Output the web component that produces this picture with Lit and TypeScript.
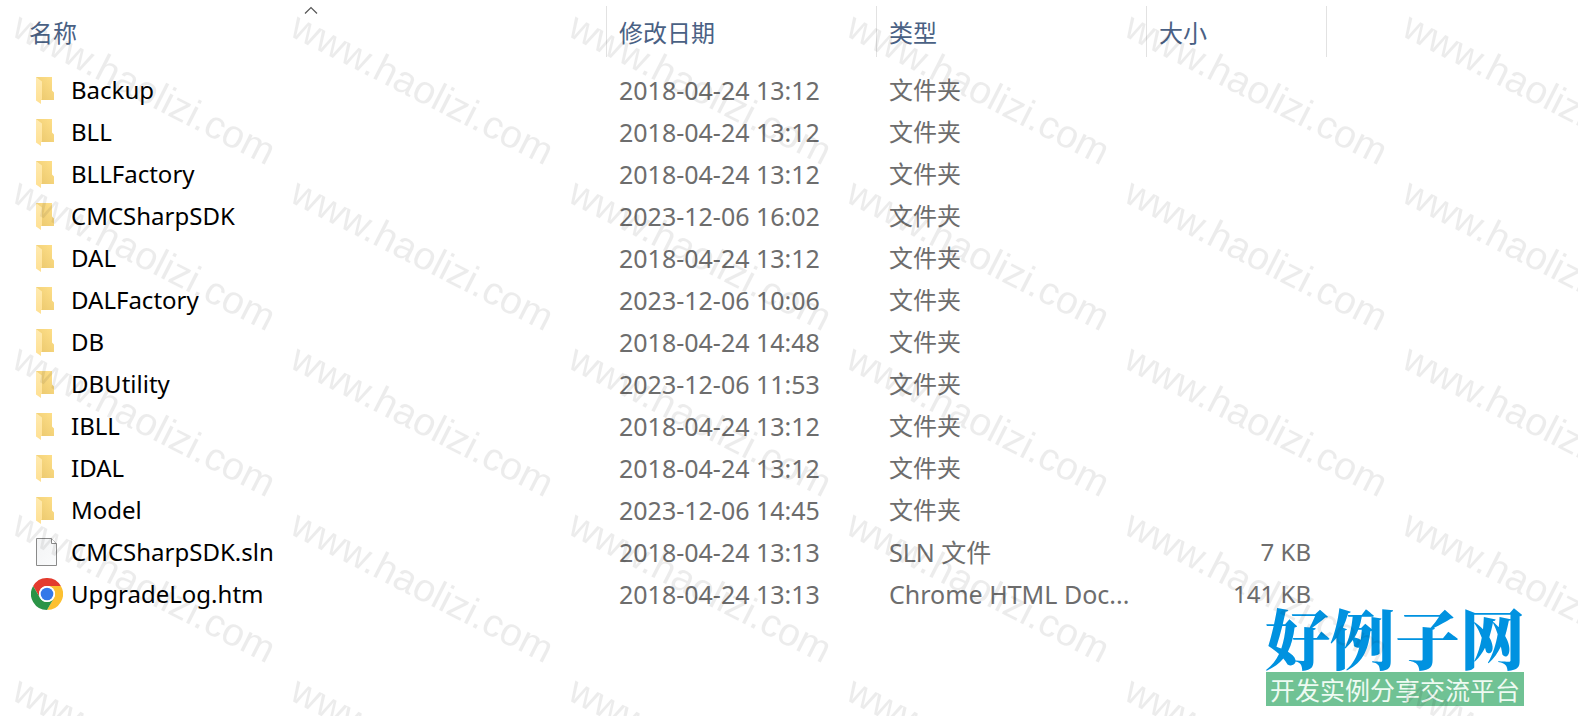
import { LitElement, html, svg, css, nothing } from "lit";
import { customElement, state } from "lit/decorators.js";

type Kind = "folder" | "file" | "chrome";

interface Entry {
  name: string;
  date: string;
  kind: Kind;
  type: string;
  size?: string;
}

const folder = (name: string, date: string): Entry => ({ name, date, kind: "folder", type: "文件夹" });

const ENTRIES: Entry[] = [
  folder("Backup", "2018-04-24 13:12"),
  folder("BLL", "2018-04-24 13:12"),
  folder("BLLFactory", "2018-04-24 13:12"),
  folder("CMCSharpSDK", "2023-12-06 16:02"),
  folder("DAL", "2018-04-24 13:12"),
  folder("DALFactory", "2023-12-06 10:06"),
  folder("DB", "2018-04-24 14:48"),
  folder("DBUtility", "2023-12-06 11:53"),
  folder("IBLL", "2018-04-24 13:12"),
  folder("IDAL", "2018-04-24 13:12"),
  folder("Model", "2023-12-06 14:45"),
  { name: "CMCSharpSDK.sln", date: "2018-04-24 13:13", kind: "file", type: "SLN 文件", size: "7 KB" },
  { name: "UpgradeLog.htm", date: "2018-04-24 13:13", kind: "chrome", type: "Chrome HTML Doc...", size: "141 KB" },
];

@customElement("file-icon")
class FileIcon extends LitElement {
  static properties = { kind: {} };
  declare kind: Kind;

  static styles = css`
    :host { display: block; width: 32px; height: 32px; flex: none; }
    svg { display: block; width: 32px; height: 32px; }
  `;

  private shape() {
    if (this.kind === "folder") {
      return svg`
        <defs>
          <linearGradient id="back" x1="0" x2="1" y1="1" y2="0">
            <stop offset="0" stop-color="#e9c66b" /><stop offset="1" stop-color="#ffe08a" />
          </linearGradient>
          <linearGradient id="flap" x1="0" x2="0" y1="0" y2="1">
            <stop offset="0" stop-color="#ffeab0" /><stop offset="1" stop-color="#ffe092" />
          </linearGradient>
        </defs>
        <path d="M5 3H21V16.5L23 18.5V26H5Z" fill="url(#back)" />
        <path d="M5 3L11 7.5V25.5L10 26V30L5 26.5Z" fill="url(#flap)" />`;
    }
    if (this.kind === "file") {
      return svg`
        <defs>
          <linearGradient id="paper" x1="0" x2="1" y1="0" y2="1">
            <stop offset="0" stop-color="#f3f4f5" /><stop offset="1" stop-color="#fafbfc" />
          </linearGradient>
        </defs>
        <path d="M5.5 2.5H20.5L25.5 7.5V29.5H5.5Z" fill="url(#paper)" stroke="#8a8a8a" />
        <path d="M20.5 2.5V7.5H25.5" fill="#fff" stroke="#8a8a8a" />`;
    }
    return svg`
      <path d="M16 8H29.86A16 16 0 0 0 2.14 8L9.07 20A8 8 0 0 1 16 8Z" fill="#e33b2e" />
      <path d="M22.93 20L16 32A16 16 0 0 0 29.86 8H16A8 8 0 0 1 22.93 20Z" fill="#fcc031" />
      <path d="M9.07 20L2.14 8A16 16 0 0 0 16 32L22.93 20A8 8 0 0 1 9.07 20Z" fill="#2b9447" />
      <circle cx="16" cy="16" r="8" fill="#fff" />
      <circle cx="16" cy="16" r="6.3" fill="#3479e9" />`;
  }

  render() {
    return html`<svg viewBox="0 0 32 32" aria-hidden="true">${this.shape()}</svg>`;
  }
}

@customElement("water-mark")
class WaterMark extends LitElement {
  static styles = css`
    :host { position: absolute; inset: 0; pointer-events: none; overflow: hidden; }
    svg { display: block; width: 100%; height: 100%; }
    text { font: 39px "Liberation Sans", Arial, sans-serif; fill: #000; fill-opacity: 0.075; }
  `;

  render() {
    return html`<svg aria-hidden="true">
      <defs>
        <pattern id="tile" x="4" y="8" width="278" height="166" patternUnits="userSpaceOnUse">
          <text transform="translate(6 27) rotate(27)">www.haolizi.com</text>
        </pattern>
      </defs>
      <rect width="100%" height="100%" fill="url(#tile)" />
    </svg>`;
  }
}

@customElement("site-badge")
class SiteBadge extends LitElement {
  static styles = css`
    :host {
      position: absolute;
      right: 54px;
      bottom: 10px;
      width: 258px;
      display: flex;
      flex-direction: column;
      align-items: center;
      gap: 6px;
      white-space: nowrap;
    }
    .title {
      font: 900 65px/60px "Noto Serif CJK SC", "Noto Sans CJK SC", serif;
      color: #0092e0;
    }
    .tagline {
      align-self: stretch;
      text-align: center;
      font: 25px/34px "Noto Sans CJK SC", sans-serif;
      color: #eefaf2;
      background: #70c294;
    }
  `;

  render() {
    return html`<div class="title">好例子网</div><div class="tagline">开发实例分享交流平台</div>`;
  }
}

@customElement("app-root")
class AppRoot extends LitElement {
  @state() private ascending = true;

  static styles = css`
    :host {
      display: block;
      position: relative;
      min-height: 100vh;
      overflow: hidden;
      background: #fff;
      color: #6d6d6d;
      font: 25px/42px "Noto Sans", "Noto Sans CJK SC", sans-serif;
    }
    .list { padding: 6px 251px 0 0; }
    table { width: 100%; table-layout: fixed; border-collapse: separate; border-spacing: 0; }
    .date, .type { width: 270px; }
    .size { width: 180px; }
    th { position: relative; height: 51px; padding: 0; box-sizing: border-box; border-right: 1px solid #e2e2e2; }
    th button {
      display: block;
      width: 100%;
      padding: 0 12px;
      border: 0;
      background: none;
      color: #4a6184;
      font: 24px/49px "Noto Sans CJK SC", sans-serif;
      text-align: left;
      cursor: pointer;
    }
    th.name button { padding-left: 29px; }
    .caret { position: absolute; top: 0; left: 16px; right: 0; margin: 0 auto; width: 14px; height: 8px; }
    .caret.down { transform: scaleY(-1); }
    tbody::before { content: ""; display: block; height: 12px; }
    td { height: 42px; padding: 0 12px; box-sizing: border-box; white-space: nowrap; }
    td.name { padding-left: 31px; color: #000; font-size: 24px; }
    td.size { padding-right: 16px; text-align: right; font-size: 24px; }
    .entry { display: flex; align-items: center; gap: 8px; }
    .cjk { font-size: 24px; }
  `;

  render() {
    const rows = this.ascending ? ENTRIES : [...ENTRIES].reverse();
    return html`
      <main class="list">
        <table>
          <thead>
            <tr>
              <th class="name" scope="col">
                <button @click=${() => (this.ascending = !this.ascending)}>名称</button>
                <svg class="caret ${this.ascending ? "" : "down"}" viewBox="0 0 14 8" aria-hidden="true">
                  <path d="M1 7.5L7 1.5L13 7.5" fill="none" stroke="#555" stroke-width="1.2" />
                </svg>
              </th>
              <th class="date" scope="col"><button>修改日期</button></th>
              <th class="type" scope="col"><button>类型</button></th>
              <th class="size" scope="col"><button>大小</button></th>
            </tr>
          </thead>
          <tbody>
            ${rows.map(
              (e) => html`<tr>
                <td class="name"><div class="entry"><file-icon .kind=${e.kind}></file-icon>${e.name}</div></td>
                <td class="date">${e.date}</td>
                <td class="type ${e.kind === "folder" ? "cjk" : ""}">${e.type}</td>
                <td class="size">${e.size ?? nothing}</td>
              </tr>`
            )}
          </tbody>
        </table>
      </main>
      <site-badge></site-badge>
      <water-mark></water-mark>
    `;
  }
}
